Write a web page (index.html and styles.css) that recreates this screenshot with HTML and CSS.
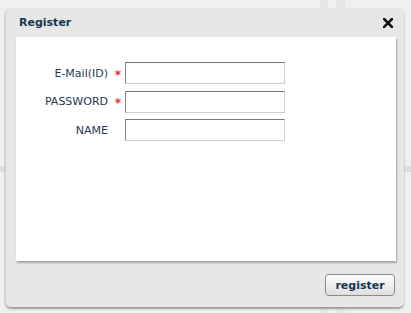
FILE: index.html
```html
<!DOCTYPE html>
<html lang="en">
<head>
  <meta charset="UTF-8">
  <title>Register</title>
  <link rel="stylesheet" href="styles.css">
</head>
<body>
  <div class="dialog">
    <div class="dialog-title">
      <h2>Register</h2>
      <button class="close-btn" aria-label="close">
        <svg width="10" height="10" viewBox="0 0 10 10">
          <path d="M1 1 L9 9 M9 1 L1 9" stroke="#111" stroke-width="2.6" stroke-linecap="square"/>
        </svg>
      </button>
    </div>

    <div class="dialog-body">
      <form class="register-form">
        <div class="form-row">
          <label for="email">E-Mail(ID)</label>
          <span class="required">*</span>
          <input type="text" id="email">
        </div>
        <div class="form-row">
          <label for="password">PASSWORD</label>
          <span class="required">*</span>
          <input type="password" id="password">
        </div>
        <div class="form-row">
          <label for="name">NAME</label>
          <span class="required"></span>
          <input type="text" id="name">
        </div>
      </form>
    </div>

    <div class="dialog-footer">
      <button class="register-btn">register</button>
    </div>
  </div>
</body>
</html>
```

FILE: styles.css
```css
body {
  margin: 0;
  width: 411px;
  height: 313px;
  font-family: 'DejaVu Sans', Verdana, sans-serif;
  background-color: #efefef;
  background-image:
    linear-gradient(90deg, transparent 320px, #e7e7e7 320px, #e7e7e7 328px, transparent 328px, transparent 336px, #e7e7e7 336px, #e7e7e7 345px, transparent 345px),
    linear-gradient(180deg, transparent 166px, #dedede 166px, #dedede 172px, transparent 172px);
  overflow: hidden;
}

.dialog {
  margin: 8px 0 0 5px;
  width: 399px;
  height: 299px;
  display: flex;
  flex-direction: column;
  background: rgba(230, 230, 230, 0.93);
  border-left: 1px solid #cfcfcf;
  border-radius: 6px;
  box-sizing: border-box;
  box-shadow: 0 2px 2px rgba(0, 0, 0, 0.35);
}

.dialog-title {
  height: 29px;
  display: flex;
  align-items: center;
  justify-content: space-between;
  padding: 0 11px 0 13px;
}

.dialog-title h2 {
  margin: 0;
  font-size: 11px;
  font-weight: bold;
  color: #153650;
}

.close-btn {
  border: none;
  background: none;
  padding: 0;
  width: 10px;
  height: 10px;
  display: flex;
}

.dialog-body {
  margin: 0 8px 0 10px;
  height: 224px;
  background: #fff;
  box-shadow: 1px 2px 2px rgba(0, 0, 0, 0.3);
  padding-top: 25px;
  box-sizing: border-box;
}

.register-form {
  display: flex;
  flex-direction: column;
  gap: 6.5px;
}

.form-row {
  display: flex;
  align-items: center;
}

.form-row label {
  width: 92px;
  text-align: right;
  font-size: 11px;
  color: #1f3a52;
}

.required {
  width: 17px;
  padding-left: 3px;
  box-sizing: border-box;
  text-align: center;
  color: #e03030;
  font-size: 12px;
  font-weight: bold;
  padding-top: 3px;
}

.form-row input {
  width: 160px;
  height: 22px;
  box-sizing: border-box;
  margin: 0;
  border: 1px solid #cdcdcd;
  border-top-color: #777;
  border-left-color: #888;
  background: #fff;
  font-family: inherit;
  font-size: 11px;
}

.dialog-footer {
  flex: 1;
  display: flex;
  justify-content: flex-end;
  align-items: flex-start;
  padding: 13px 9px 0 0;
}

.register-btn {
  width: 70px;
  height: 22px;
  border: 1px solid #8a8a8a;
  border-radius: 4px;
  background: linear-gradient(180deg, #fdfdfd 0%, #ececec 60%, #dedede 100%);
  font-family: inherit;
  font-size: 11px;
  font-weight: bold;
  color: #153650;
  padding: 0;
}
```
